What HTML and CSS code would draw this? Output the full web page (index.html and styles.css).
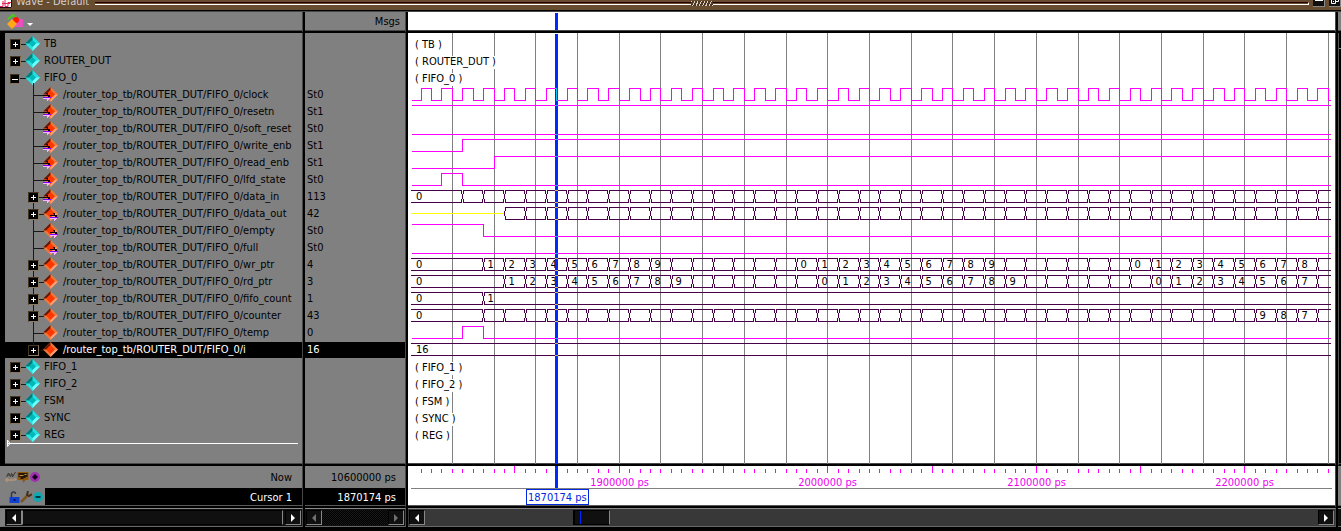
FILE: index.html
```html
<!DOCTYPE html>
<html lang="en">
<head>
<meta charset="utf-8">
<title>Wave - Default</title>
<link rel="stylesheet" href="styles.css">
</head>
<body>
<svg class="symbols" aria-hidden="true">
  <symbol id="group" viewBox="0 0 15 15">
    <path fill="#20e0e0" d="M7.5 0 15 7.500 7.500 15 0 7.500z"/>
    <path fill="#087878" d="M7.500 0V4L4 7.500H0z"/>
    <path fill="#70ffff" d="M15 7.500 7.500 15V11L11 7.500z"/>
    <path fill="#00b8b8" d="M7.500 4 11 7.500 7.500 11 4 7.500z"/>
  </symbol>
  <symbol id="net" viewBox="0 0 15 15">
    <path fill="#f07838" d="M7.500 0 15 7.500 7.500 15 0 7.500z"/>
    <path fill="#601808" d="M7.500 0V4L4 7.500H0z"/>
    <path fill="#ffa078" d="M15 7.500 7.500 15V11L11 7.500z"/>
    <path fill="#ff3800" d="M7.500 3 12 7.500 7.500 12 3 7.500z"/>
  </symbol>
  <symbol id="arrow" viewBox="0 0 8 8">
    <path fill="#100010" d="M3 0H5V2H7V4H5V3H0V2H4z"/>
    <path fill="#8000ff" d="M0 4H8V5H0z"/>
    <path fill="#ffb0ff" d="M0 5H7V6H6V7H5V8H4V6H0z"/>
  </symbol>
  <symbol id="in" viewBox="0 0 15 15"><use href="#net" width="15" height="15"/><use href="#arrow" x="0" y="6" width="8" height="8"/></symbol>
  <symbol id="out" viewBox="0 0 15 15"><use href="#net" width="15" height="15"/><use href="#arrow" x="7" y="7" width="8" height="8"/></symbol>
</svg>

<header class="titlebar">
  <svg class="app-icon" viewBox="0 0 12 8" aria-hidden="true"><path fill="#fff" d="M0 0H12V8H0z"/><path fill="none" stroke="#e02858" d="M0 6.500H3V1M5 0V6.500H8V2.500H11M2 3.500H10"/><path fill="none" stroke="#200818" d="M11.500 0V7.500H0"/></svg>
  <h1 class="title">Wave - Default</h1>
  <div class="groove"><span class="grip"></span></div>
  <button class="win-button" aria-label="Undock"><svg viewBox="0 0 12 6"><path fill="#fff" d="M2 0H10V1H2z"/></svg></button>
  <button class="win-button" aria-label="Maximize"><svg viewBox="0 0 12 6"><path fill="none" stroke="#fff" d="M2.500 0V3.500H6.500V0M5 1.500H4M7 1.500H9.500V0"/></svg></button>
</header>

<main class="panes">
  <section class="pane names">
    <div class="head">
      <button class="filter" aria-label="Signal filter">
        <svg viewBox="0 0 26 16"><path fill="none" stroke="#40d010" stroke-width="2" d="M1 5 6 1 10 5"/><path fill="#e850c0" d="M7 5H16V13H7z"/><circle cx="9" cy="6" r="3" fill="#ff1800"/><path fill="#ffa818" d="M5 5 10 10 5 15 0 10z"/><path fill="#fff" d="M20 9H26L23 12z"/></svg>
      </button>
    </div>
    <div class="body">
      <ul class="tree">
        <li><button class="exp plus" aria-label="Expand"></button><svg class="ico"><use href="#group"/></svg>TB</li>
        <li><button class="exp plus" aria-label="Expand"></button><svg class="ico"><use href="#group"/></svg>ROUTER_DUT</li>
        <li><button class="exp" aria-label="Collapse"></button><svg class="ico"><use href="#group"/></svg>FIFO_0
          <ul class="children">
            <li><svg class="ico"><use href="#in"/></svg>/router_top_tb/ROUTER_DUT/FIFO_0/clock</li>
            <li><svg class="ico"><use href="#in"/></svg>/router_top_tb/ROUTER_DUT/FIFO_0/resetn</li>
            <li><svg class="ico"><use href="#in"/></svg>/router_top_tb/ROUTER_DUT/FIFO_0/soft_reset</li>
            <li><svg class="ico"><use href="#in"/></svg>/router_top_tb/ROUTER_DUT/FIFO_0/write_enb</li>
            <li><svg class="ico"><use href="#in"/></svg>/router_top_tb/ROUTER_DUT/FIFO_0/read_enb</li>
            <li><svg class="ico"><use href="#in"/></svg>/router_top_tb/ROUTER_DUT/FIFO_0/lfd_state</li>
            <li><button class="exp plus" aria-label="Expand"></button><svg class="ico"><use href="#in"/></svg>/router_top_tb/ROUTER_DUT/FIFO_0/data_in</li>
            <li><button class="exp plus" aria-label="Expand"></button><svg class="ico"><use href="#out"/></svg>/router_top_tb/ROUTER_DUT/FIFO_0/data_out</li>
            <li><svg class="ico"><use href="#out"/></svg>/router_top_tb/ROUTER_DUT/FIFO_0/empty</li>
            <li><svg class="ico"><use href="#out"/></svg>/router_top_tb/ROUTER_DUT/FIFO_0/full</li>
            <li><button class="exp plus" aria-label="Expand"></button><svg class="ico"><use href="#net"/></svg>/router_top_tb/ROUTER_DUT/FIFO_0/wr_ptr</li>
            <li><button class="exp plus" aria-label="Expand"></button><svg class="ico"><use href="#net"/></svg>/router_top_tb/ROUTER_DUT/FIFO_0/rd_ptr</li>
            <li><button class="exp plus" aria-label="Expand"></button><svg class="ico"><use href="#net"/></svg>/router_top_tb/ROUTER_DUT/FIFO_0/fifo_count</li>
            <li><button class="exp plus" aria-label="Expand"></button><svg class="ico"><use href="#net"/></svg>/router_top_tb/ROUTER_DUT/FIFO_0/counter</li>
            <li><svg class="ico"><use href="#net"/></svg>/router_top_tb/ROUTER_DUT/FIFO_0/temp</li>
            <li class="selected"><button class="exp plus" aria-label="Expand"></button><svg class="ico"><use href="#net"/></svg>/router_top_tb/ROUTER_DUT/FIFO_0/i</li>
          </ul>
        </li>
        <li><button class="exp plus" aria-label="Expand"></button><svg class="ico"><use href="#group"/></svg>FIFO_1</li>
        <li><button class="exp plus" aria-label="Expand"></button><svg class="ico"><use href="#group"/></svg>FIFO_2</li>
        <li><button class="exp plus" aria-label="Expand"></button><svg class="ico"><use href="#group"/></svg>FSM</li>
        <li><button class="exp plus" aria-label="Expand"></button><svg class="ico"><use href="#group"/></svg>SYNC</li>
        <li><button class="exp plus" aria-label="Expand"></button><svg class="ico"><use href="#group"/></svg>REG</li>
      </ul>
      <div class="insertion"><svg viewBox="0 0 4 7" aria-hidden="true"><path fill="none" stroke="#fff" d="M.5 0V6.500L3 3.500z"/></svg></div>
    </div>
    <div class="foot">
      <div class="now">
        <span class="tools">
          <button aria-label="Time units"><svg viewBox="0 0 11 12"><path fill="none" stroke="#403830" d="M1 6 3 2 5 6M6 2 7 6 10 1M2 4H8"/><path fill="none" stroke="#d0a070" d="M1 9H10M2 7 0 9 2 11M9 7 11 9"/></svg></button>
          <button aria-label="Bookmark"><svg viewBox="0 0 11 12"><path fill="#90580c" d="M0 1H11V9H8L6 12 5 9H0z"/><path fill="#281808" d="M1 2H10V6H8V7H6V8H3V6H1z"/><path stroke="#c09050" d="M2 4.500H6M7 3.500H9"/></svg></button>
          <button aria-label="Add cursor"><svg viewBox="0 0 11 12"><circle cx="5.500" cy="6" r="5" fill="#a030b0"/><path fill="#180020" d="M5.500 3 8.500 6 5.500 9 2.500 6z"/></svg></button>
        </span>
        <span class="caption">Now</span>
      </div>
      <div class="cursor-row">
        <span class="tools">
          <button aria-label="Lock cursor"><svg viewBox="0 0 11 12"><path fill="none" stroke="#303848" stroke-width="1.500" d="M3 6V3Q3 1 5 1T7 3"/><path fill="#1040d0" d="M1 6H11V12H1z"/><path fill="#001870" d="M5 8H7V10H5z"/></svg></button>
          <button aria-label="Edit cursor"><svg viewBox="0 0 12 12"><path stroke="#7c5420" stroke-width="2.500" d="M1 11 7 5"/><path fill="none" stroke="#483018" stroke-width="2" d="M8 0 7 4 9 5 12 3"/></svg></button>
          <button aria-label="Remove cursor"><svg viewBox="0 0 11 12"><circle cx="5.500" cy="6" r="5" fill="#10a8b0"/><path stroke="#003840" stroke-width="2" d="M3 6H8"/></svg></button>
        </span>
        <span class="caption">Cursor 1</span>
      </div>
    </div>
    <div class="scroll">
      <button class="step" aria-label="Scroll left"><svg viewBox="0 0 4 8"><path d="M4 0V8L0 4z"/></svg></button>
      <div class="thumb"></div>
      <button class="step" aria-label="Scroll right"><svg viewBox="0 0 4 8"><path d="M0 0V8L4 4z"/></svg></button>
    </div>
  </section>

  <section class="pane values">
    <div class="head">Msgs</div>
    <div class="body">
      <ul class="list">
        <li></li><li></li><li></li>
        <li>St0</li><li>St1</li><li>St0</li><li>St1</li><li>St1</li><li>St0</li>
        <li>113</li><li>42</li><li>St0</li><li>St0</li><li>4</li><li>3</li><li>1</li><li>43</li><li>0</li>
        <li class="selected">16</li>
      </ul>
    </div>
    <div class="foot">
      <div class="now">10600000 ps</div>
      <div class="cursor-row">1870174 ps</div>
    </div>
    <div class="scroll disabled">
      <button class="step" disabled aria-label="Scroll left"><svg viewBox="0 0 4 8"><path d="M4 0V8L0 4z"/></svg></button>
      <div class="track"></div>
      <button class="step" disabled aria-label="Scroll right"><svg viewBox="0 0 4 8"><path d="M0 0V8L4 4z"/></svg></button>
    </div>
  </section>

  <section class="pane waves">
    <div class="head"></div>
    <div class="body"><svg id="plot" role="img" aria-label="Signal waveforms"></svg></div>
    <div class="foot"><svg id="ruler" role="img" aria-label="Timeline"></svg><output class="cursor-time">1870174 ps</output></div>
    <div class="scroll">
      <button class="step" aria-label="Scroll left"><svg viewBox="0 0 4 8"><path d="M4 0V8L0 4z"/></svg></button>
      <div class="lane"><div class="thumb"></div></div>
      <button class="step" aria-label="Scroll right"><svg viewBox="0 0 4 8"><path d="M0 0V8L4 4z"/></svg></button>
    </div>
  </section>

  <div class="pane edge"><div class="head"></div><div class="body"></div><div class="foot"></div><div class="scroll"></div></div>
</main>
<script src="script.js"></script>
</body>
</html>
```
FILE: styles.css
```css
* { box-sizing: border-box; }
html, body { height: 100%; }
body {
  margin: 0;
  display: flex;
  flex-direction: column;
  background: #000;
  color: #000;
  font: 11px/17px "DejaVu Sans Condensed", "DejaVu Sans", sans-serif;
  overflow: hidden;
}
button { margin: 0; padding: 0; border: 0; background: none; color: inherit; font: inherit; display: block; }
ul { margin: 0; padding: 0; list-style: none; }
svg { display: block; }
.symbols { position: absolute; width: 0; height: 0; }

.titlebar {
  flex: none;
  display: flex;
  height: 12px;
  background: #684c30;
  border-bottom: 1px solid #484848;
  box-shadow: inset 0 -1px #000;
  overflow: hidden;
}
.app-icon { width: 12px; height: 8px; }
.title { margin: -7px 6px 0 4px; font-size: 11px; line-height: 17px; font-weight: normal; color: #d0d0d0; }
.groove { flex: 1; height: 3px; margin-top: 2px; border-top: 1px solid #280000; border-right: 1px solid #fff; border-bottom: 1px solid #fff; display: flex; justify-content: center; }
.grip { width: 22px; height: 5px; margin: -2px 0 0; flex: none; background: repeating-linear-gradient(115deg, #d8d0c8 0 1px, #503820 1px 3px); }
.win-button { width: 12px; height: 7px; margin-left: 4px; background: #101010; border-right: 1px solid #888; border-bottom: 1px solid #888; }
.win-button svg { width: 12px; height: 6px; }

.panes { flex: 1; min-height: 0; display: grid; grid-template-columns: 305px 103px 1fr 3px; margin-bottom: 4px; }
.pane { display: grid; grid-template-rows: 21px 1fr 42px 19px; min-width: 0; min-height: 0; background: #808080; border-right: 2px solid #000; }
.head, .body { border-bottom: 2px solid #000; box-shadow: inset 0 -1px #484848; }
.head, .body, .foot, .scroll { min-width: 0; min-height: 0; border-right: 1px solid #484848; }
.body { overflow: hidden; padding-top: 3px; }
.foot { border-bottom: 2px solid #000; box-shadow: inset 0 -1px #585858; }

.filter { margin: 2px 0 0 7px; }
.filter svg { width: 26px; height: 16px; }
.names .body { border-left: 5px solid #000; }
.tree li { position: relative; height: 17px; padding-left: 39px; white-space: nowrap; line-height: 15px; }
.tree > li:nth-child(3) { height: auto; }
.children { position: relative; margin: 2px 0 0 -39px; }
.tree .children li { padding-left: 58px; }
.children::before { content: ""; position: absolute; z-index: 1; left: 28px; top: -4px; bottom: 10px; width: 1px; background: #181818; }
.tree li::before { content: ""; position: absolute; left: 12px; top: 8px; width: 12px; height: 1px; background: #181818; }
.tree .children li::before { left: 28px; width: 12px; }
.exp { position: absolute; z-index: 2; left: 5px; top: 4px; width: 10px; height: 10px; border: 1px solid #44351f; border-right-color: #8c7a60; border-bottom-color: #8c7a60; background: linear-gradient(#fff, #fff) center / 6px 1px no-repeat, #000; }
.exp.plus { background: linear-gradient(#fff, #fff) center / 5px 1px no-repeat, linear-gradient(#fff, #fff) center / 1px 5px no-repeat, #000; width: 11px; height: 11px; top: 3px; }
.children .exp { left: 23px; }
.ico { position: absolute; left: 20px; top: 0; width: 15px; height: 15px; }
.children .ico { left: 38px; }
.tree .selected, .list .selected { height: 16px; margin-bottom: 1px; background: #000; color: #fff; }
.insertion { margin: -4px 4px 0 2px; background: linear-gradient(#fff, #fff) 0 3px / 100% 1px no-repeat; }
.insertion svg { width: 4px; height: 7px; }

.now, .cursor-row { display: flex; align-items: center; justify-content: flex-end; }
.now { height: 22px; }
.cursor-row { height: 17px; background: #000; color: #fff; padding-top: 2px; }
.caption { margin-left: auto; padding-right: 10px; }
.tools { display: flex; padding-left: 5px; }
.tools svg { width: 12px; height: 12px; }
.names .cursor-row .tools { align-self: stretch; align-items: center; width: 45px; margin-top: -2px; padding-left: 8px; background: #808080; }

.values .head { padding-right: 5px; text-align: right; line-height: 20px; }
.list li { height: 17px; line-height: 15px; padding-left: 2px; }
.values .now, .values .cursor-row { padding-right: 9px; }

.scroll { display: flex; padding: 1px; background: #101010; border-top: 1px solid #888; border-bottom: 1px solid #686868; }
.names .scroll { border-left: 5px solid #808080; }
.step { flex: none; width: 16px; display: grid; place-items: center; background: #101010; border: 1px solid #000; border-right-color: #888; border-bottom-color: #888; }
.step svg { width: 4px; height: 8px; fill: #fff; }
.scroll > .thumb { flex: 1; margin-right: 2px; border: 1px solid #000; border-left-color: #888; border-right-color: #888; }
.disabled .step svg { fill: #707070; }
.track { flex: 1; background: repeating-conic-gradient(#000 0 25%, #181818 0 50%) 0 0 / 2px 2px; }

.waves { background: #fff; }
.waves .head { background: linear-gradient(#0028ff, #0028ff) 147px 1px / 3px 17px no-repeat; }
.waves .body { padding: 0; }
#plot { width: 100%; height: 100%; }
.waves .foot { position: relative; }
#ruler { width: 100%; height: 39px; }
.cursor-time { position: absolute; left: 118px; top: 23px; height: 16px; padding: 0 1px; border: 1px solid #0028e0; background: #fff; color: #0028e0; line-height: 15px; white-space: nowrap; }
.waves .scroll { background: #383838; }
.lane { flex: 1; display: flex; padding-left: 16%; }
.lane .thumb { width: 37px; border: 1px solid #000; border-left-width: 2px; border-right-color: #888; background: linear-gradient(#0028ff, #0028ff) 5px 0 / 1px 100% no-repeat, #101010; }

.edge { border-right: 0; }
.edge > * { border-right: 0; }
.edge .body { background: linear-gradient(#888, #888) 0 15px / 3px 1px no-repeat, #000; border-left: 1px solid #585858; }

.grid { stroke: #808080; fill: none; }
.bit { stroke: #ff00ff; fill: none; }
.bus { stroke: #480048; fill: none; }
.unknown { stroke: #ffff00; fill: none; }
.cursor { fill: #0028ff; }
.over .bit { stroke: #00c8ff; }
.over .bus { stroke: #c8c848; }
.mask { fill: #fff; }
.grid, .bit, .bus, .unknown { shape-rendering: crispEdges; }
.stamp { fill: #f000f0; text-anchor: middle; }
```
FILE: script.js
```js
const NS = "http://www.w3.org/2000/svg";
const STEP = 10.43;      // half a clock period
const ORIGIN = 13;       // first clock edge
const ROW = 17;
const CURSOR = 147;

function add(parent, name, attrs, text) {
  const el = document.createElementNS(NS, name);
  for (const key in attrs) el.setAttribute(key, attrs[key]);
  if (text !== undefined) el.textContent = text;
  parent.appendChild(el);
  return el;
}

const edge = n => Math.floor(ORIGIN + STEP * n) + 0.5;
const seq = (start, from, to) => {
  const out = {};
  for (let v = from; v <= to; v++) out[start + v - from] = v;
  return out;
};

const groups = { 0: "TB", 1: "ROUTER_DUT", 2: "FIFO_0", 19: "FIFO_1", 20: "FIFO_2", 21: "FSM", 22: "SYNC", 23: "REG" };

// level: initial value, flips: half-period indexes where the value toggles
const bits = [
  { row: 3, level: 0, flips: Array.from({ length: 88 }, (_, i) => i) },
  { row: 4, level: 1, flips: [] },
  { row: 5, level: 0, flips: [] },
  { row: 6, level: 0, flips: [4] },
  { row: 7, level: 0, flips: [7] },
  { row: 8, level: 0, flips: [2, 4] },
  { row: 11, level: 1, flips: [6] },
  { row: 12, level: 0, flips: [] },
  { row: 17, level: 0, flips: [4, 6] }
];

// first/last: clock cycles between which the value changes every cycle
const buses = [
  { row: 9, init: "0", first: 2, last: 43, labels: {} },
  { row: 10, init: "", first: 4, last: 43, labels: {}, unknown: true },
  { row: 13, init: "0", first: 3, last: 43, labels: { ...seq(3, 1, 9), ...seq(18, 0, 9), ...seq(34, 0, 8) } },
  { row: 14, init: "0", first: 4, last: 43, labels: { ...seq(4, 1, 9), ...seq(19, 0, 9), ...seq(35, 0, 7) } },
  { row: 15, init: "0", first: 3, last: 3, labels: { 3: 1 } },
  { row: 16, init: "0", first: 3, last: 43, labels: { 40: 9, 41: 8, 42: 7 } },
  { row: 18, init: "16", first: 1, last: 0, labels: {} }
];

function drawPlot() {
  const svg = document.getElementById("plot");
  svg.replaceChildren();
  const width = svg.clientWidth, height = svg.clientHeight, end = width - 4;

  let d = "";
  for (let n = 3; edge(n) < end; n += 4) d += `M${edge(n)} 0V${height}`;
  add(svg, "path", { class: "grid", d });

  for (const row in groups) {
    const label = add(svg, "text", { x: 7, y: 15 + ROW * row }, `( ${groups[row]} )`);
    const box = label.getBBox();
    const mask = add(svg, "rect", { class: "mask", x: box.x, y: box.y + 1, width: box.width, height: box.height });
    svg.insertBefore(mask, label);
  }

  const lines = add(svg, "g", { id: "lines" });
  for (const bit of bits) {
    const high = 4.5 + ROW * bit.row, low = high + 12;
    let level = bit.level;
    let path = `M4 ${level ? high : low}`;
    for (const n of bit.flips) {
      if (edge(n) > end) break;
      level = 1 - level;
      path += `H${edge(n)}V${level ? high : low}`;
    }
    add(lines, "path", { class: "bit", d: path + `H${end}` });
  }

  for (const bus of buses) {
    const top = 4.5 + ROW * bus.row, bottom = top + 12;
    let path = "", from = 3;
    if (bus.unknown) {
      from = edge(bus.first * 2);
      add(lines, "path", { class: "unknown", d: `M3 ${top + 6}H${from}` });
    }
    for (let c = bus.first; c <= bus.last; c++) {
      const x = edge(c * 2);
      if (x > end) break;
      if (x > from) path += `M${from} ${top}H${x - 1}V${top + 3.5}M${from} ${bottom}H${x - 1}V${bottom - 3.5}`;
      path += `M${x} ${top + 3.5}V${bottom - 3.5}M${x + 1} ${top}V${top + 3.5}M${x + 1} ${bottom}V${bottom - 3.5}`;
      from = x + 0.5;
    }
    path += `M${from} ${top}H${end}M${from} ${bottom}H${end}`;
    add(lines, "path", { class: "bus", d: path });
    add(svg, "text", { x: 8, y: 14 + ROW * bus.row }, bus.init);
    for (const c in bus.labels) add(svg, "text", { x: edge(c * 2) + 4, y: 14 + ROW * bus.row }, bus.labels[c]);
  }

  add(svg, "rect", { class: "cursor", x: CURSOR, y: 1, width: 3, height });
  const clip = add(svg, "clipPath", { id: "under-cursor" });
  add(clip, "rect", { x: CURSOR, y: 0, width: 3, height });
  const over = add(svg, "g", { class: "over", "clip-path": "url(#under-cursor)" });
  over.appendChild(lines.cloneNode(true)).removeAttribute("id");
}

function drawRuler() {
  const svg = document.getElementById("ruler");
  svg.replaceChildren();
  const end = svg.clientWidth - 3;
  let d = "", stamp = 1900000;
  for (let n = 0; edge(n) < end; n++) {
    d += `M${edge(n)} ${n % 10 === 9 ? 0 : 3}V7`;
    if (n % 20 === 19) {
      add(svg, "text", { class: "stamp", x: edge(n), y: 20 }, `${stamp} ps`);
      stamp += 100000;
    }
  }
  add(svg, "path", { class: "bit", d });
  add(svg, "path", { class: "grid", d: `M3 22.5H${end}` });
  add(svg, "rect", { class: "cursor", x: CURSOR, y: 0, width: 3, height: 22 });
}

function draw() { drawPlot(); drawRuler(); }
draw();
window.addEventListener("resize", draw);
```
